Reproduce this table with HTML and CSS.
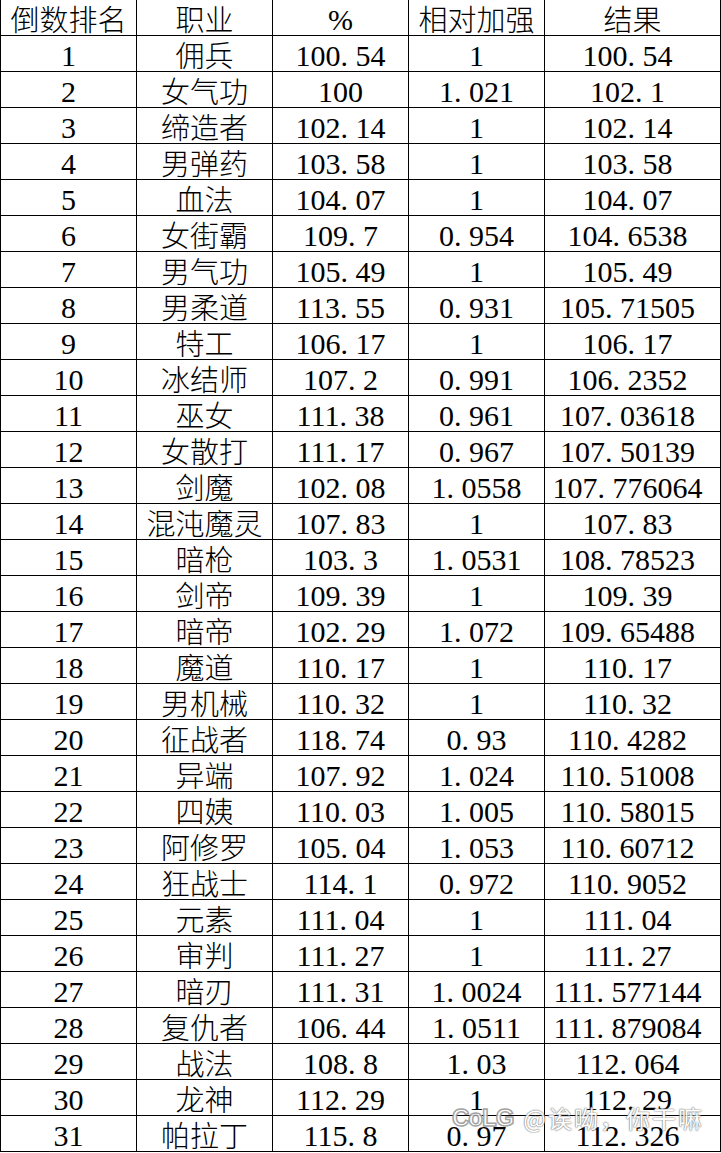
FILE: index.html
```html
<!DOCTYPE html>
<html lang="zh-CN">
<head>
<meta charset="utf-8">
<title>倒数排名</title>
<link rel="stylesheet" href="styles.css">
</head>
<body>
<div class="sheet">
  <div class="row head">
    <div class="c cj">倒数排名</div><div class="c cj">职业</div><div class="c n">%</div><div class="c cj">相对加强</div><div class="c cj">结果</div>
  </div>
  <div class="row"><div class="c n">1</div><div class="c cj">佣兵</div><div class="c n">100<i>.</i>54</div><div class="c n">1</div><div class="c n">100<i>.</i>54</div></div>
  <div class="row"><div class="c n">2</div><div class="c cj">女气功</div><div class="c n">100</div><div class="c n">1<i>.</i>021</div><div class="c n">102<i>.</i>1</div></div>
  <div class="row"><div class="c n">3</div><div class="c cj">缔造者</div><div class="c n">102<i>.</i>14</div><div class="c n">1</div><div class="c n">102<i>.</i>14</div></div>
  <div class="row"><div class="c n">4</div><div class="c cj">男弹药</div><div class="c n">103<i>.</i>58</div><div class="c n">1</div><div class="c n">103<i>.</i>58</div></div>
  <div class="row"><div class="c n">5</div><div class="c cj">血法</div><div class="c n">104<i>.</i>07</div><div class="c n">1</div><div class="c n">104<i>.</i>07</div></div>
  <div class="row"><div class="c n">6</div><div class="c cj">女街霸</div><div class="c n">109<i>.</i>7</div><div class="c n">0<i>.</i>954</div><div class="c n">104<i>.</i>6538</div></div>
  <div class="row"><div class="c n">7</div><div class="c cj">男气功</div><div class="c n">105<i>.</i>49</div><div class="c n">1</div><div class="c n">105<i>.</i>49</div></div>
  <div class="row"><div class="c n">8</div><div class="c cj">男柔道</div><div class="c n">113<i>.</i>55</div><div class="c n">0<i>.</i>931</div><div class="c n">105<i>.</i>71505</div></div>
  <div class="row"><div class="c n">9</div><div class="c cj">特工</div><div class="c n">106<i>.</i>17</div><div class="c n">1</div><div class="c n">106<i>.</i>17</div></div>
  <div class="row"><div class="c n">10</div><div class="c cj">冰结师</div><div class="c n">107<i>.</i>2</div><div class="c n">0<i>.</i>991</div><div class="c n">106<i>.</i>2352</div></div>
  <div class="row"><div class="c n">11</div><div class="c cj">巫女</div><div class="c n">111<i>.</i>38</div><div class="c n">0<i>.</i>961</div><div class="c n">107<i>.</i>03618</div></div>
  <div class="row"><div class="c n">12</div><div class="c cj">女散打</div><div class="c n">111<i>.</i>17</div><div class="c n">0<i>.</i>967</div><div class="c n">107<i>.</i>50139</div></div>
  <div class="row"><div class="c n">13</div><div class="c cj">剑魔</div><div class="c n">102<i>.</i>08</div><div class="c n">1<i>.</i>0558</div><div class="c n">107<i>.</i>776064</div></div>
  <div class="row"><div class="c n">14</div><div class="c cj">混沌魔灵</div><div class="c n">107<i>.</i>83</div><div class="c n">1</div><div class="c n">107<i>.</i>83</div></div>
  <div class="row"><div class="c n">15</div><div class="c cj">暗枪</div><div class="c n">103<i>.</i>3</div><div class="c n">1<i>.</i>0531</div><div class="c n">108<i>.</i>78523</div></div>
  <div class="row"><div class="c n">16</div><div class="c cj">剑帝</div><div class="c n">109<i>.</i>39</div><div class="c n">1</div><div class="c n">109<i>.</i>39</div></div>
  <div class="row"><div class="c n">17</div><div class="c cj">暗帝</div><div class="c n">102<i>.</i>29</div><div class="c n">1<i>.</i>072</div><div class="c n">109<i>.</i>65488</div></div>
  <div class="row"><div class="c n">18</div><div class="c cj">魔道</div><div class="c n">110<i>.</i>17</div><div class="c n">1</div><div class="c n">110<i>.</i>17</div></div>
  <div class="row"><div class="c n">19</div><div class="c cj">男机械</div><div class="c n">110<i>.</i>32</div><div class="c n">1</div><div class="c n">110<i>.</i>32</div></div>
  <div class="row"><div class="c n">20</div><div class="c cj">征战者</div><div class="c n">118<i>.</i>74</div><div class="c n">0<i>.</i>93</div><div class="c n">110<i>.</i>4282</div></div>
  <div class="row"><div class="c n">21</div><div class="c cj">异端</div><div class="c n">107<i>.</i>92</div><div class="c n">1<i>.</i>024</div><div class="c n">110<i>.</i>51008</div></div>
  <div class="row"><div class="c n">22</div><div class="c cj">四姨</div><div class="c n">110<i>.</i>03</div><div class="c n">1<i>.</i>005</div><div class="c n">110<i>.</i>58015</div></div>
  <div class="row"><div class="c n">23</div><div class="c cj">阿修罗</div><div class="c n">105<i>.</i>04</div><div class="c n">1<i>.</i>053</div><div class="c n">110<i>.</i>60712</div></div>
  <div class="row"><div class="c n">24</div><div class="c cj">狂战士</div><div class="c n">114<i>.</i>1</div><div class="c n">0<i>.</i>972</div><div class="c n">110<i>.</i>9052</div></div>
  <div class="row"><div class="c n">25</div><div class="c cj">元素</div><div class="c n">111<i>.</i>04</div><div class="c n">1</div><div class="c n">111<i>.</i>04</div></div>
  <div class="row"><div class="c n">26</div><div class="c cj">审判</div><div class="c n">111<i>.</i>27</div><div class="c n">1</div><div class="c n">111<i>.</i>27</div></div>
  <div class="row"><div class="c n">27</div><div class="c cj">暗刃</div><div class="c n">111<i>.</i>31</div><div class="c n">1<i>.</i>0024</div><div class="c n">111<i>.</i>577144</div></div>
  <div class="row"><div class="c n">28</div><div class="c cj">复仇者</div><div class="c n">106<i>.</i>44</div><div class="c n">1<i>.</i>0511</div><div class="c n">111<i>.</i>879084</div></div>
  <div class="row"><div class="c n">29</div><div class="c cj">战法</div><div class="c n">108<i>.</i>8</div><div class="c n">1<i>.</i>03</div><div class="c n">112<i>.</i>064</div></div>
  <div class="row"><div class="c n">30</div><div class="c cj">龙神</div><div class="c n">112<i>.</i>29</div><div class="c n">1</div><div class="c n">112<i>.</i>29</div></div>
  <div class="row"><div class="c n">31</div><div class="c cj">帕拉丁</div><div class="c n">115<i>.</i>8</div><div class="c n">0<i>.</i>97</div><div class="c n">112<i>.</i>326</div></div>
</div>
<div class="wm"><span class="wm-logo">CoLG</span><span class="wm-text">@诶呦，你干嘛</span></div>
</body>
</html>
```
FILE: styles.css
```css
html, body {
  margin: 0;
  padding: 0;
  background: #fff;
}
body {
  position: relative;
  width: 721px;
  height: 1153px;
  overflow: hidden;
  color: #000;
}
.sheet {
  display: flex;
  flex-direction: column;
}
.row {
  display: grid;
  grid-template-columns: 137px 136px 136px 136px 176px;
  height: 36px;
}
.c {
  box-sizing: border-box;
  border-right: 1px solid #000;
  border-bottom: 1px solid #000;
  display: flex;
  align-items: flex-end;
  justify-content: center;
  white-space: nowrap;
}
.row .c:first-child {
  border-left: 1px solid #000;
}
.row .c.n:last-child {
  padding-right: 10px;
}
.n {
  font-family: "Liberation Serif", "Times New Roman", serif;
  font-size: 30px;
  line-height: 30px;
  letter-spacing: 0;
  padding-bottom: 0;
}
.n i {
  font-style: normal;
  margin-right: 7.5px;
}
.cj {
  font-family: "Noto Sans CJK SC", sans-serif;
  font-size: 29px;
  line-height: 30px;
  font-weight: 300;
  padding-bottom: 2px;
}
.wm {
  position: absolute;
  left: 452px;
  top: 1100px;
  display: flex;
  align-items: center;
  gap: 10px;
  opacity: 0.9;
}
.wm-logo {
  font-family: "Liberation Sans", sans-serif;
  font-weight: bold;
  font-size: 24px;
  color: #fff;
  -webkit-text-stroke: 1.5px #9a9a9a;
  letter-spacing: -1px;
}
.wm-text {
  font-family: "Noto Sans CJK SC", sans-serif;
  font-size: 24px;
  color: #fff;
  letter-spacing: 2px;
  text-shadow: 0 0 1px #777, 0 0 1px #777, 0 0 2px #999;
}
```
